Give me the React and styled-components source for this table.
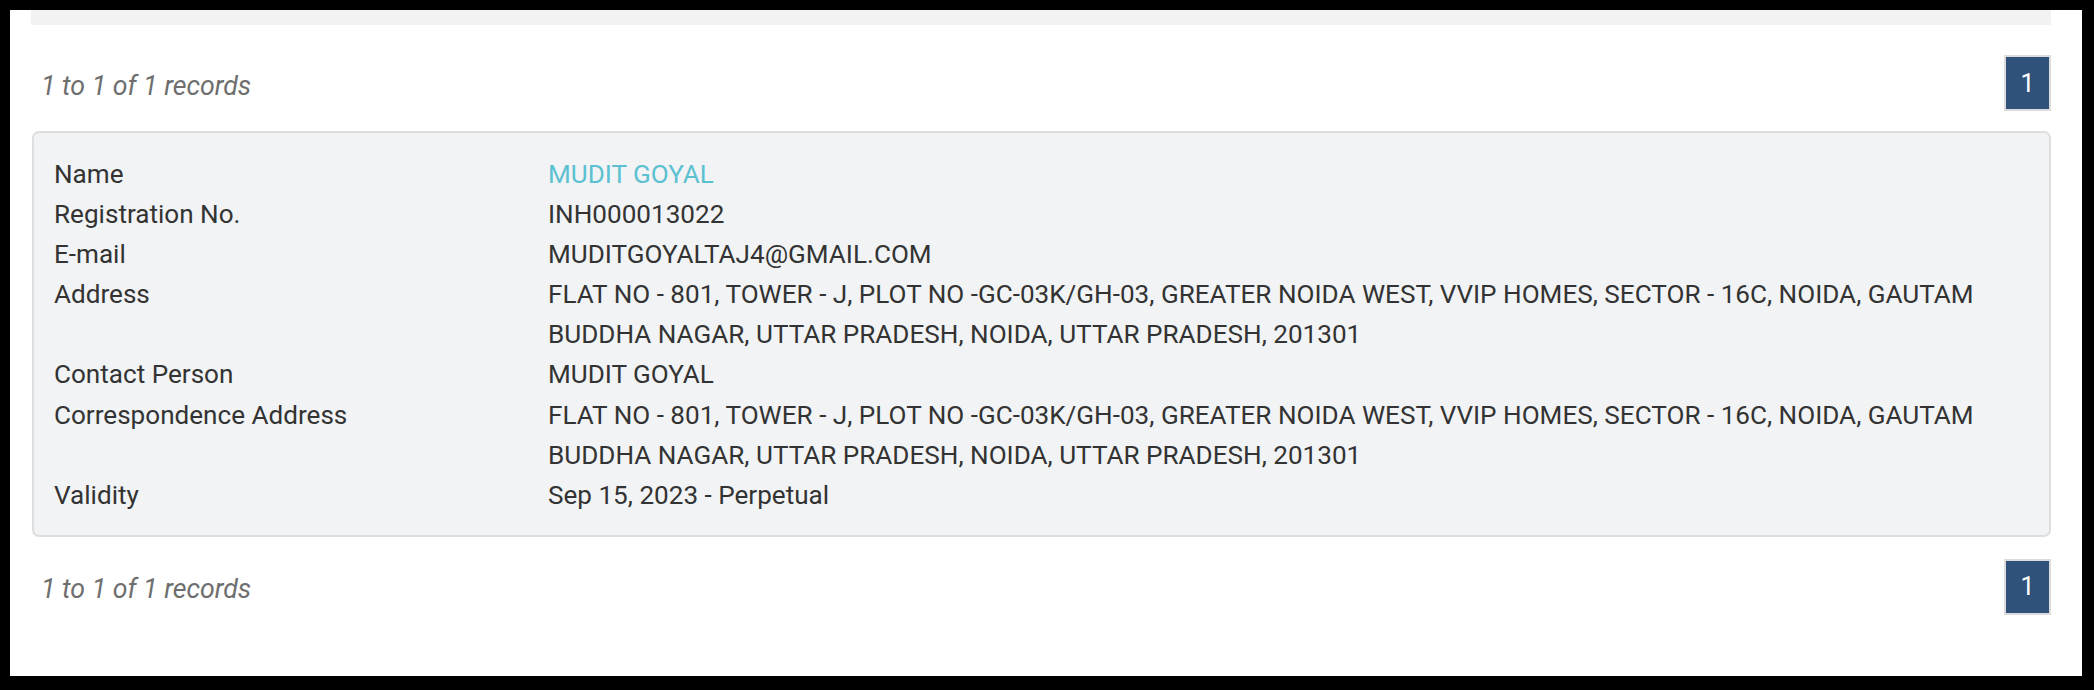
import React from "react";
import styled, { createGlobalStyle } from "styled-components";

const GlobalStyle = createGlobalStyle`
  html, body {
    margin: 0;
    padding: 0;
    background: #000;
  }
  body {
    font-family: Roboto, "Liberation Sans", Arial, sans-serif;
  }
  #root {
    padding: 10px 12px 14px 10px;
  }
`;

const Page = styled.div`
  background: #fff;
  height: 666px;
  padding: 0 31px 0 21px;
  box-sizing: border-box;
`;

const TopBar = styled.div`
  height: 15px;
  background: #f3f2f3;
`;

const Pager = styled.div`
  display: flex;
  justify-content: space-between;
  align-items: center;
  margin: ${(p) => p.$mt}px 0 ${(p) => p.$mb}px 0;
  padding-left: 10px;
`;

const Info = styled.div`
  font-style: italic;
  font-size: 26.7px;
  color: #6e6e6e;
  padding-top: 5px;
`;

const PageButton = styled.div`
  width: 47px;
  height: 56px;
  box-sizing: border-box;
  border: 2px solid #dcdcdc;
  background: #30527a;
  color: #fff;
  display: flex;
  align-items: center;
  justify-content: center;
  font-size: 25px;
`;

const Card = styled.div`
  margin-left: 1px;
  background: #f2f3f5;
  border: 2px solid #dedede;
  border-radius: 7px;
  padding: 21px 20px 20px 20px;
  display: grid;
  grid-template-columns: 494px 1fr;
  font-size: 26.1px;
  line-height: 40.1px;
  color: #333;
`;

const Label = styled.div`
  color: #333;
`;

const Value = styled.div`
  color: ${(p) => (p.$link ? "#5bc1d1" : "#333")};
`;

const rows = [
  { label: "Name", value: "MUDIT GOYAL", link: true },
  { label: "Registration No.", value: "INH000013022" },
  { label: "E-mail", value: "MUDITGOYALTAJ4@GMAIL.COM" },
  {
    label: "Address",
    value:
      "FLAT NO - 801, TOWER - J, PLOT NO -GC-03K/GH-03, GREATER NOIDA WEST, VVIP HOMES, SECTOR - 16C, NOIDA, GAUTAM BUDDHA NAGAR, UTTAR PRADESH, NOIDA, UTTAR PRADESH, 201301",
  },
  { label: "Contact Person", value: "MUDIT GOYAL" },
  {
    label: "Correspondence Address",
    value:
      "FLAT NO - 801, TOWER - J, PLOT NO -GC-03K/GH-03, GREATER NOIDA WEST, VVIP HOMES, SECTOR - 16C, NOIDA, GAUTAM BUDDHA NAGAR, UTTAR PRADESH, NOIDA, UTTAR PRADESH, 201301",
  },
  { label: "Validity", value: "Sep 15, 2023 - Perpetual" },
];

export default function App() {
  return (
    <>
      <GlobalStyle />
      <Page>
        <TopBar />
        <Pager $mt={30} $mb={20}>
          <Info>1 to 1 of 1 records</Info>
          <PageButton>1</PageButton>
        </Pager>
        <Card>
          {rows.map((r) => (
            <React.Fragment key={r.label}>
              <Label>{r.label}</Label>
              <Value $link={r.link}>{r.value}</Value>
            </React.Fragment>
          ))}
        </Card>
        <Pager $mt={22} $mb={0}>
          <Info>1 to 1 of 1 records</Info>
          <PageButton>1</PageButton>
        </Pager>
      </Page>
    </>
  );
}
